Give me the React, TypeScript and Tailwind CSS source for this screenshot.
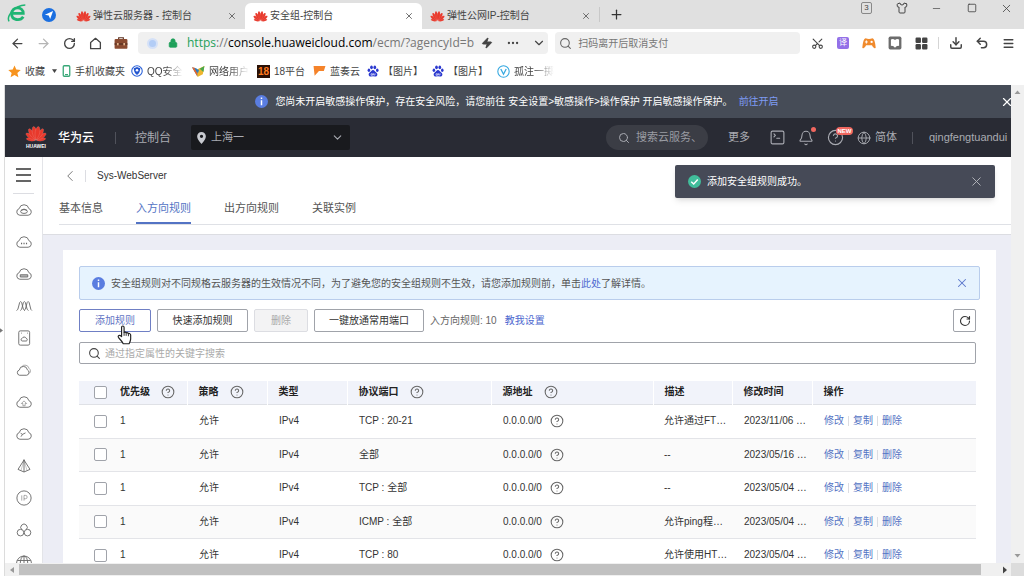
import type { ReactNode } from 'react'
import {
  ArrowLeft,
  ArrowRight,
  Bell,
  ChevronDown,
  ChevronLeft,
  CircleHelp,
  Download,
  Ellipsis,
  Globe,
  Lock,
  Menu,
  Minus,
  Plus,
  RotateCw,
  Scissors,
  Search,
  Shirt,
  Square,
  SquareTerminal,
  Undo2,
  X,
  Zap
} from 'lucide-react'

const petals = [
  { angle: -78, scale: 0.72 },
  { angle: 78, scale: 0.72 },
  { angle: -54, scale: 0.9 },
  { angle: 54, scale: 0.9 },
  { angle: -31, scale: 1 },
  { angle: 31, scale: 1 },
  { angle: -10, scale: 1.05 },
  { angle: 10, scale: 1.05 }
]

const HuaweiLogo = ({ className }: { className?: string }) => (
  <svg viewBox="0 0 32 24" className={className} aria-hidden="true">
    {petals.map(({ angle, scale }) => (
      <path
        key={angle}
        transform={`translate(16 22) rotate(${angle}) scale(${scale})`}
        d="M0 -1C-3.4 -7 -4.4 -14 -1.6 -19.5C-.8 -21 .8 -21 1.6 -19.5C4.4 -14 3.4 -7 0 -1Z"
        fill="#e8392c"
        stroke="#ffffff"
        strokeOpacity=".35"
        strokeWidth=".5"
      />
    ))}
  </svg>
)

const BrowserLogo = () => (
  <svg viewBox="0 0 24 24" className="h-5 w-5" fill="none" aria-hidden="true">
    <path d="M5 12.5H19.5C19.5 3.5 6 3.5 5.5 13C5.5 21 16 22 19.5 16.5" stroke="#1fb573" strokeWidth="3.4" />
    <path d="M2.5 22C-1 16 9 3 22 2.5" stroke="#1fb573" strokeWidth="1.8" />
  </svg>
)

const Briefcase = () => (
  <svg viewBox="0 0 24 24" className="h-[14px] w-[14px]" aria-hidden="true">
    <path d="M8 6V3H16V6" fill="none" stroke="#5b3222" strokeWidth="2" />
    <rect x="1" y="5" width="22" height="17" rx="2" fill="#8a4b31" />
    <path d="M1 12.5H23V15H1Z" fill="#5b3222" />
    <rect x="5" y="12" width="3" height="4" fill="#e2b48e" />
    <rect x="16" y="12" width="3" height="4" fill="#e2b48e" />
  </svg>
)

const Gamepad = () => (
  <svg viewBox="0 0 24 24" className="h-[14px] w-[14px]" aria-hidden="true">
    <path d="M6 4Q12 6 18 4Q22 5 23.5 20Q20 23 17 16H7Q4 23 .5 20Q2 5 6 4Z" fill="#f08a2c" />
    <path d="M7.5 7.5V13M5 10.2H10" stroke="#fff" strokeWidth="1.6" />
    <circle cx="16.5" cy="10.2" r="2" fill="#fff" />
  </svg>
)

const Reader = () => (
  <svg viewBox="0 0 24 24" className="h-[14px] w-[14px]" aria-hidden="true">
    <rect x="1" y="1" width="22" height="22" rx="3" fill="#6c6c6c" />
    <path d="M5 6Q9 4 12 7Q15 4 19 6V17Q15 16 12 20Q9 16 5 17Z" fill="#fff" />
  </svg>
)

const Apps = () => (
  <svg viewBox="0 0 24 24" className="h-[13px] w-[13px]" fill="#444" aria-hidden="true">
    <rect x="1" y="1" width="10" height="10" rx="2" />
    <rect x="13" y="1" width="10" height="10" rx="2" />
    <rect x="1" y="13" width="10" height="10" rx="2" />
    <rect x="13" y="13" width="10" height="10" rx="2" />
  </svg>
)

const Info = () => (
  <svg viewBox="0 0 16 16" className="h-[13px] w-[13px] shrink-0" aria-hidden="true">
    <circle cx="8" cy="8" r="8" fill="#5a7de0" />
    <path d="M8 3.2V5M8 6.6V12.6" stroke="#fff" strokeWidth="1.8" />
  </svg>
)

const HandCursor = () => (
  <svg
    viewBox="0 0 18 24"
    className="pointer-events-none absolute top-4 left-[38px] z-10 h-5 w-[15px]"
    aria-hidden="true"
  >
    <path
      d="M5.5 14V3Q5.5 1.2 7 1.2Q8.5 1.2 8.5 3V9Q9.8 7.8 11 9.3Q12.6 8.6 13.6 10.2Q15.8 9.6 16.4 12V17Q16 20 14.5 22.5H7.5Q6 19.5 2.2 15.6Q.6 13.6 2.2 12.6Q3.6 12 5.5 14Z"
      fill="#fff"
      stroke="#222"
      strokeWidth="1.4"
      strokeLinejoin="round"
    />
    <path d="M8.5 9V13M11 9.5V13M13.7 10.5V13.5" stroke="#222" strokeWidth="1.1" />
  </svg>
)

const Paw = () => (
  <svg viewBox="0 0 24 24" className="h-3 w-3 shrink-0" fill="#2b39cf" aria-hidden="true">
    <ellipse cx="3.8" cy="10.5" rx="2.6" ry="3.5" />
    <ellipse cx="9" cy="4.6" rx="2.7" ry="3.8" />
    <ellipse cx="15.6" cy="4.6" rx="2.7" ry="3.8" />
    <ellipse cx="20.6" cy="10.5" rx="2.6" ry="3.5" />
    <path d="M12 10C9 10 8.5 13 5 15.5C1.5 18.5 4 23.5 8 23Q12 22 16 23C20.5 23.5 22.5 18.5 19 15.5C15.5 13 15 10 12 10Z" />
    <path d="M8 17.5H11V20.5H8ZM13 16.5V20H16V16.5" fill="none" stroke="#fff" strokeWidth="1.2" />
  </svg>
)

const pageTabs = [
  { title: '弹性云服务器 - 控制台', active: false },
  { title: '安全组-控制台', active: true },
  { title: '弹性公网IP-控制台', active: false }
]

const bookmarks: { name: string; width: string; faded?: boolean; icon: ReactNode }[] = [
  {
    name: '收藏',
    width: 'w-[54px]',
    icon: (
      <svg viewBox="0 0 24 24" className="h-[13px] w-[13px] shrink-0" fill="#f7931e" aria-hidden="true">
        <path d="M12 1L15.3 8.5L23.5 9.3L17.3 14.7L19.2 22.7L12 18.5L4.8 22.7L6.7 14.7L.5 9.3L8.7 8.5Z" />
      </svg>
    )
  },
  {
    name: '手机收藏夹',
    width: 'w-[69px]',
    icon: (
      <svg viewBox="0 0 16 24" className="h-3 w-[9px] shrink-0" fill="none" aria-hidden="true">
        <rect x="1.5" y="1.5" width="13" height="21" rx="2" stroke="#39a878" strokeWidth="2.6" />
        <path d="M5 19H11" stroke="#39a878" strokeWidth="2" />
      </svg>
    )
  },
  {
    name: 'QQ安全',
    width: 'w-[61px]',
    faded: true,
    icon: (
      <svg viewBox="0 0 24 24" className="h-3 w-3 shrink-0" aria-hidden="true">
        <circle cx="12" cy="12" r="10.5" fill="#fff" stroke="#2b62d9" strokeWidth="2.2" />
        <path d="M12 4L18.5 6.5Q18.5 15.5 12 20Q5.5 15.5 5.5 6.5Z" fill="#2456cf" />
        <circle cx="12" cy="10.5" r="2.5" fill="#fff" />
      </svg>
    )
  },
  {
    name: '网络用户',
    width: 'w-[65px]',
    faded: true,
    icon: (
      <svg viewBox="0 0 24 24" className="h-[13px] w-[13px] shrink-0" aria-hidden="true">
        <path d="M0 4L9 7L13 14L10 21Z" fill="#2a7fc0" />
        <path d="M0 4L5 5L11 18L9 20Z" fill="#e9662b" />
        <path d="M10 8L23 2L20 17L10 22Z" fill="#efb62e" />
        <path d="M14 7L23 2L21 13Z" fill="#49a94d" />
        <path d="M4 5L13 9L11 15Z" fill="#2a7fc0" />
      </svg>
    )
  },
  {
    name: '18平台',
    width: 'w-[56px]',
    icon: (
      <span
        className="flex h-[13px] w-[13px] shrink-0 items-center justify-center bg-[#2a1005] text-[10px] font-bold text-[#ff7a1e]"
        aria-hidden="true"
      >
        18
      </span>
    )
  },
  {
    name: '蓝奏云',
    width: 'w-[54px]',
    icon: (
      <svg viewBox="0 0 24 24" className="h-[13px] w-[13px] shrink-0" fill="#f5832a" aria-hidden="true">
        <path d="M1 2H23L20 11H11L3 20Z" />
      </svg>
    )
  },
  { name: '【图片】', width: 'w-[65px]', icon: <Paw /> },
  { name: '【图片】', width: 'w-[65px]', icon: <Paw /> },
  {
    name: '孤注一掷',
    width: 'w-[60px]',
    faded: true,
    icon: (
      <svg viewBox="0 0 24 24" className="h-[13px] w-[13px] shrink-0" fill="none" aria-hidden="true">
        <circle cx="12" cy="12" r="10.5" stroke="#35a8e0" strokeWidth="2" />
        <path d="M7 7.5L12 17L17 7.5" stroke="#35a8e0" strokeWidth="2.4" />
      </svg>
    )
  }
]

const cloud = 'M6.5 19H17.5A4.5 4.5 0 0 0 18.5 10.2A6.6 6.6 0 0 0 5.6 10.2A4.5 4.5 0 0 0 6.5 19Z'

const services: { name: string; drawing: ReactNode }[] = [
  {
    name: '弹性云服务器',
    drawing: (
      <>
        <path d={cloud} />
        <ellipse cx="12" cy="14" rx="4.5" ry="2.6" />
        <path d="M8 12.5Q12 9 16 12.5" />
      </>
    )
  },
  {
    name: '云容器引擎',
    drawing: (
      <>
        <path d={cloud} />
        <path d="M8 14H9.5M11.3 14H12.8M14.6 14H16.1" strokeWidth="1.8" />
      </>
    )
  },
  {
    name: '裸金属服务器',
    drawing: (
      <>
        <path d={cloud} />
        <path d="M7 13H17V16H7Z" fill="#bbb" />
      </>
    )
  },
  {
    name: '弹性伸缩',
    drawing: (
      <path d="M2 18Q4 18 5 12T7.5 6Q9 6 10 12T13 18M7 18Q9 18 10 12T12.5 6Q14 6 15 12T18 18M12 18Q14 18 15 12T17.5 6Q19 6 20 12T22.5 18" />
    )
  },
  {
    name: '云硬盘',
    drawing: (
      <>
        <rect x="5" y="2.5" width="14.5" height="19" rx="2" />
        <path d="M9.5 16H15A1.8 1.8 0 0 0 15 12.5A3 3 0 0 0 9.5 12.5A1.8 1.8 0 0 0 9.5 16Z" />
        <path d="M8 5.5H9M16 5.5H17" />
      </>
    )
  },
  {
    name: '云备份',
    drawing: (
      <>
        <path d="M6 19H15.5A3.8 3.8 0 0 0 16.5 11.8A5.4 5.4 0 0 0 5.8 12A3.6 3.6 0 0 0 6 19Z" />
        <path d="M9 7.5A5.6 5.6 0 0 1 18.8 10A4 4 0 0 1 19 16.5" strokeOpacity=".6" />
      </>
    )
  },
  {
    name: '对象存储',
    drawing: (
      <>
        <path d={cloud} />
        <path d="M12 10.5L15.5 14H13.5V17H10.5V14H8.5Z" strokeOpacity=".6" />
      </>
    )
  },
  {
    name: '内容分发',
    drawing: (
      <>
        <path d={cloud} />
        <path d="M8 15.5L10 12.5L14 10.5M7.5 11L10 12.5" />
      </>
    )
  },
  {
    name: '弹性负载均衡',
    drawing: (
      <>
        <path d="M12 3V20M12 4L4 16.5L12 20L20 16.5Z" />
        <path d="M12 4L8 18M12 4L16 18" strokeOpacity=".4" />
      </>
    )
  },
  {
    name: '弹性公网IP',
    drawing: (
      <>
        <circle cx="12" cy="12" r="9.5" />
        <path d="M9 8.5V15.5M12 15.5V8.5H14A2.2 2.2 0 0 1 14 13H12" strokeOpacity=".6" />
      </>
    )
  },
  {
    name: '云监控',
    drawing: (
      <>
        <path d="M9 11.5A4.3 4.3 0 1 1 15 11.5" />
        <circle cx="7.3" cy="15.5" r="4.4" />
        <circle cx="16.7" cy="15.5" r="4.4" />
      </>
    )
  },
  {
    name: '域名解析',
    drawing: (
      <>
        <circle cx="12" cy="14" r="10" />
        <ellipse cx="12" cy="14" rx="5" ry="10" />
        <path d="M12 4V24M3 10H21M2 15H22" />
      </>
    )
  }
]

const rules = [
  { port: 'TCP : 20-21', note: '允许通过FT…', time: '2023/11/06 …' },
  { port: '全部', note: '--', time: '2023/05/16 …' },
  { port: 'TCP : 全部', note: '--', time: '2023/05/04 …' },
  { port: 'ICMP : 全部', note: '允许ping程…', time: '2023/05/04 …' },
  { port: 'TCP : 80', note: '允许使用HT…', time: '2023/05/04 …' }
]

const columns = [
  { title: '优先级', help: true },
  { title: '策略', help: true },
  { title: '类型', help: false },
  { title: '协议端口', help: true },
  { title: '源地址', help: true },
  { title: '描述', help: false },
  { title: '修改时间', help: false },
  { title: '操作', help: false }
]

const ToolButton = ({ label, children }: { label: string; children: ReactNode }) => (
  <button type="button" aria-label={label} className="flex h-6 w-[26px] shrink-0 items-center justify-center text-[#444]">
    {children}
  </button>
)

const WindowButton = ({ label, children }: { label: string; children: ReactNode }) => (
  <button type="button" aria-label={label} className="flex h-4 w-[35px] items-center justify-center text-[#444]">
    {children}
  </button>
)

const TabStrip = () => (
  <div className="flex h-[29px] shrink-0 bg-[#e0e0e0]">
    <div className="flex w-[68px] shrink-0 items-center gap-[15px] pb-[3px] pl-[7px]">
      <BrowserLogo />
      <svg viewBox="0 0 24 24" className="mt-1 h-[14px] w-[14px]" aria-hidden="true">
        <circle cx="12" cy="12" r="12" fill="#1b6fe0" />
        <path d="M5 11.5L19 5L14 19L11.5 13Z" fill="#fff" />
      </svg>
    </div>
    <div className="flex" role="tablist">
      {pageTabs.map((tab) => (
        <div
          key={tab.title}
          className={`flex w-[177px] items-center pl-2 ${tab.active ? 'mt-[3px] rounded-t-md bg-white' : 'pt-[3px]'}`}
        >
          <HuaweiLogo className="h-[11px] w-[15px] shrink-0" />
          <button
            type="button"
            role="tab"
            aria-selected={tab.active}
            className="ml-[2px] flex-1 truncate text-left text-[10px] leading-4 text-[#444]"
          >
            {tab.title}
          </button>
          <button type="button" aria-label="关闭标签页" className="mr-2 text-[#555]">
            <X size={10} />
          </button>
        </div>
      ))}
    </div>
    <button type="button" aria-label="新建标签页" className="my-[7px] border-l border-[#c8c8c8] px-[9px] text-[#333]">
      <Plus size={15} />
    </button>
    <div className="ml-auto flex items-start">
      <WindowButton label="标签页数量">
        <span className="flex h-3 w-[11px] items-center justify-center rounded-xs border border-[#888] text-[8px]">3</span>
      </WindowButton>
      <WindowButton label="皮肤">
        <Shirt size={12} />
      </WindowButton>
      <WindowButton label="最小化">
        <Minus size={11} strokeWidth={1.5} />
      </WindowButton>
      <WindowButton label="最大化">
        <Square size={10} />
      </WindowButton>
      <WindowButton label="关闭">
        <X size={13} strokeWidth={1.5} />
      </WindowButton>
    </div>
  </div>
)

const AddressBar = () => (
  <div className="flex h-7 shrink-0 items-center bg-white pr-[3px] pl-1">
    <ToolButton label="后退">
      <ArrowLeft size={15} />
    </ToolButton>
    <ToolButton label="前进">
      <ArrowRight size={15} className="text-[#b5b5b5]" />
    </ToolButton>
    <ToolButton label="刷新">
      <RotateCw size={13} strokeWidth={2.5} />
    </ToolButton>
    <ToolButton label="主页">
      <svg viewBox="0 0 24 24" className="h-[13px] w-[13px]" fill="none" stroke="#444" strokeWidth="2.4" aria-hidden="true">
        <path d="M3 10L12 2.5L21 10V21.5H3Z" strokeLinejoin="round" />
      </svg>
    </ToolButton>
    <ToolButton label="工具箱">
      <Briefcase />
    </ToolButton>
    <div className="ml-1 flex h-[22px] min-w-0 flex-5 items-center rounded-sm bg-[#f0f0f0] pl-[9px]">
      <span className="flex h-[11px] w-[11px] shrink-0 items-center justify-center rounded-full bg-[#d5e1f7]">
        <span className="h-[7px] w-[7px] rounded-full bg-[#b3cdf6]" />
      </span>
      <Lock size={10} className="mr-[9px] ml-[10px] shrink-0 text-[#1fa05a]" fill="#1fa05a" />
      <a
        href="#address"
        className="flex-1 font-['Open_Sans',sans-serif] text-[12px] leading-5 whitespace-nowrap text-[#777]"
      >
        <span className="text-[#1fa05a]">https</span>://<span className="text-black">console.huaweicloud.com</span>
        /ecm/?agencyId=b
      </a>
      <ToolButton label="极速模式">
        <Zap size={12} fill="#444" />
      </ToolButton>
      <ToolButton label="更多操作">
        <Ellipsis size={14} />
      </ToolButton>
      <ToolButton label="展开地址">
        <ChevronDown size={14} />
      </ToolButton>
    </div>
    <label className="ml-[7px] flex h-[22px] min-w-0 flex-3 items-center rounded-sm bg-[#f0f0f0] pl-1">
      <Search size={13} className="shrink-0 text-[#666]" />
      <input
        type="text"
        aria-label="搜索"
        placeholder="扫码离开后取消支付"
        className="ml-[6px] w-full min-w-0 bg-transparent text-[10px] outline-none placeholder:text-[#777]"
      />
    </label>
    <div className="ml-1 flex">
      <ToolButton label="截图">
        <Scissors size={13} className="-rotate-90" />
      </ToolButton>
      <ToolButton label="翻译">
        <span className="flex h-3 w-3 items-center justify-center rounded-xs bg-[#9370e8] text-[8px] text-white">译</span>
      </ToolButton>
      <ToolButton label="游戏">
        <Gamepad />
      </ToolButton>
      <ToolButton label="阅读">
        <Reader />
      </ToolButton>
      <ToolButton label="应用">
        <Apps />
      </ToolButton>
    </div>
    <span className="mx-1 h-3 w-px shrink-0 bg-[#d5d5d5]" />
    <ToolButton label="下载">
      <Download size={14} strokeWidth={2.5} />
    </ToolButton>
    <ToolButton label="恢复">
      <Undo2 size={14} strokeWidth={2.5} />
    </ToolButton>
    <ToolButton label="菜单">
      <Menu size={13} strokeWidth={2.5} />
    </ToolButton>
  </div>
)

const BookmarkBar = () => (
  <nav className="flex h-7 shrink-0 items-center bg-white pl-2" aria-label="收藏栏">
    {bookmarks.map(({ name, width, faded, icon }, index) => (
      <a
        key={index}
        href="#bookmark"
        className={`flex h-5 shrink-0 items-center gap-1 whitespace-nowrap text-[10px] text-[#444] ${width}`}
      >
        {icon}
        <span className={faded ? 'mask-r-from-50%' : ''}>{name}</span>
        {index === 0 && (
          <svg viewBox="0 0 8 6" className="ml-[3px] h-1 w-[5px]" fill="#444" aria-hidden="true">
            <path d="M0 0H8L4 6Z" />
          </svg>
        )}
      </a>
    ))}
  </nav>
)

const ConsoleHeader = () => (
  <header className="flex h-[39px] shrink-0 items-center bg-[#292b34] pl-5 whitespace-nowrap text-[#a9abb2]">
    <a href="#home" className="flex items-center text-white">
      <span className="flex w-[22px] flex-col items-center">
        <HuaweiLogo className="h-4 w-[22px]" />
        <span className="mt-px text-[5px] leading-[6px] font-bold">HUAWEI</span>
      </span>
      <span className="ml-[11px] text-[12px] font-medium">华为云</span>
    </a>
    <span className="mr-[19px] ml-[21px] h-3 w-px bg-[#50525b]" />
    <a href="#console" className="text-[12px]">
      控制台
    </a>
    <div className="ml-5 flex h-[25px] w-[159px] items-center rounded-xs bg-[#191a1e] px-[6px]">
      <svg viewBox="0 0 16 22" className="h-3 w-[9px] shrink-0" aria-hidden="true">
        <path
          d="M8 0A8 8 0 0 1 16 8Q16 14 8 22Q0 14 0 8A8 8 0 0 1 8 0ZM8 5A3 3 0 1 0 8 11A3 3 0 1 0 8 5Z"
          fill="#c8cad0"
          fillRule="evenodd"
        />
      </svg>
      <select aria-label="区域" className="ml-[5px] flex-1 appearance-none bg-transparent text-[11px] outline-none">
        <option>上海一</option>
      </select>
      <ChevronDown size={13} className="shrink-0" />
    </div>
    <label className="ml-auto flex h-[25px] w-[102px] items-center rounded-full bg-[#3b3d45] pr-[10px] pl-3">
      <Search size={12} className="shrink-0" />
      <input
        type="text"
        aria-label="搜索云服务"
        placeholder="搜索云服务、"
        className="ml-[6px] w-full min-w-0 bg-transparent text-[11px] outline-none placeholder:text-[#9a9ca3]"
      />
    </label>
    <button type="button" className="ml-5 text-[11px]">
      更多
    </button>
    <button type="button" aria-label="CloudShell" className="ml-[19px]">
      <SquareTerminal size={17} strokeWidth={1.6} />
    </button>
    <button type="button" aria-label="消息" className="relative ml-[12px]">
      <Bell size={16} strokeWidth={1.6} />
      <span className="absolute -top-[3px] -right-[2px] h-[5px] w-[5px] rounded-full bg-[#f0675f]" />
    </button>
    <button type="button" aria-label="帮助" className="relative ml-[13px]">
      <CircleHelp size={17} strokeWidth={1.6} />
      <span className="absolute -top-[2px] left-[9px] flex h-2 w-[17px] items-center justify-center rounded-full bg-[#f0675f] text-[6px] font-bold text-white">
        NEW
      </span>
    </button>
    <button type="button" className="ml-[13px] flex items-center gap-1 text-[11px]">
      <Globe size={14} strokeWidth={1.6} />
      简体
    </button>
    <span className="mr-4 ml-[15px] h-3 w-px bg-[#50525b]" />
    <a href="#account" className="w-[82px] overflow-hidden text-[11px]">
      qingfengtuandui
    </a>
  </header>
)

const ServiceRail = () => (
  <nav className="flex w-[38px] shrink-0 flex-col items-center border-r border-[#e3e4e8] bg-white" aria-label="服务列表">
    <button
      type="button"
      aria-label="展开菜单"
      className="flex h-[37px] w-[21px] shrink-0 items-center justify-center border-b border-[#dcdde2]"
    >
      <svg viewBox="0 0 15 14" className="h-[14px] w-[15px]" stroke="#333" strokeWidth="1.5" aria-hidden="true">
        <path d="M0 1H15M0 7H15M0 13H15" />
      </svg>
    </button>
    {services.map(({ name, drawing }) => (
      <a key={name} href="#service" aria-label={name} className="flex h-8 shrink-0 items-center">
        <svg viewBox="0 0 24 24" className="h-[18px] w-[18px]" fill="none" stroke="#666" strokeWidth="1.2" aria-hidden="true">
          {drawing}
        </svg>
      </a>
    ))}
  </nav>
)

const sections = ['基本信息', '入方向规则', '出方向规则', '关联实例']

const PageHeading = () => (
  <div className="shrink-0 border-b border-[#dcdde2] bg-white pb-[9px] pl-4">
    <div className="flex h-[37px] items-center">
      <button type="button" aria-label="返回" className="ml-[2px] text-[#777]">
        <ChevronLeft size={18} strokeWidth={1.3} />
      </button>
      <span className="mr-[11px] ml-[6px] h-3 w-px bg-[#dcdde2]" />
      <h1 className="text-[10px] text-[#333]">Sys-WebServer</h1>
    </div>
    <nav className="flex h-[31px] gap-[33px] border-b border-[#dfe1e6]" aria-label="安全组">
      {sections.map((section, index) => (
        <a
          key={section}
          href="#section"
          className={`flex h-[30px] items-center border-b-2 text-[11px] ${
            index === 1 ? 'border-[#5373c4] text-[#5373c4]' : 'border-transparent text-[#555]'
          }`}
        >
          {section}
        </a>
      ))}
    </nav>
  </div>
)

const HelpButton = () => (
  <button type="button" aria-label="说明" className="text-[#666]">
    <CircleHelp size={14} strokeWidth={1.8} />
  </button>
)

const RuleCheckbox = ({ label }: { label: string }) => (
  <input
    type="checkbox"
    aria-label={label}
    className="block h-[13px] w-[13px] appearance-none rounded-xs border border-[#a0a3aa] bg-white"
  />
)

const RuleTable = () => (
  <table className="mt-[17px] w-full table-fixed border-collapse text-left text-[10px] leading-4 text-[#333]">
    <colgroup>
      <col className="w-[30px]" />
      <col className="w-[78px]" />
      <col className="w-20" />
      <col className="w-20" />
      <col className="w-36" />
      <col className="w-[162px]" />
      <col className="w-[79px]" />
      <col className="w-20" />
      <col />
    </colgroup>
    <thead>
      <tr className="h-[23px] border-b border-[#dfe1e6] bg-[#f1f3fa]">
        <th className="pl-[15px]">
          <RuleCheckbox label="全选" />
        </th>
        {columns.map(({ title, help }, index) => (
          <th key={title} className={`pl-[11px] font-bold text-[#222] ${index > 0 ? 'border-l border-white' : ''}`}>
            <div className="flex items-center gap-[11px]">
              {title}
              {help && <HelpButton />}
            </div>
          </th>
        ))}
      </tr>
    </thead>
    <tbody>
      {rules.map(({ port, note, time }, index) => (
        <tr key={index} className="h-[34px] border-b border-[#e3e4e8] whitespace-nowrap even:h-[33px] even:bg-[#fafafa]">
          <td className="pl-[15px]">
            <RuleCheckbox label={`选择规则 ${index + 1}`} />
          </td>
          <td className="pl-[11px]">1</td>
          <td className="pl-3">允许</td>
          <td className="pl-3">IPv4</td>
          <td className="pl-3">{port}</td>
          <td className="pl-3">
            <div className="flex items-center gap-2">
              0.0.0.0/0
              <HelpButton />
            </div>
          </td>
          <td className="pl-[11px]">{note}</td>
          <td className="pl-3">{time}</td>
          <td className="pl-3">
            <div className="flex items-center text-[#5373c4]">
              <a href="#edit">修改</a>
              <span className="mx-1 h-[10px] w-px bg-[#dcdde2]" />
              <a href="#copy">复制</a>
              <span className="mx-1 h-[10px] w-px bg-[#dcdde2]" />
              <a href="#delete">删除</a>
            </div>
          </td>
        </tr>
      ))}
    </tbody>
  </table>
)

const InboundRules = () => (
  <div className="mt-[15px] mr-[15px] ml-5 flex-1 bg-white p-4">
    <div className="flex h-[34px] items-center rounded-xs border border-[#b9cdec] bg-[#e6f3fe] pr-[10px] pl-3 text-[10px] whitespace-nowrap text-[#555]">
      <Info />
      <p className="ml-[6px] flex-1">
        安全组规则对不同规格云服务器的生效情况不同，为了避免您的安全组规则不生效，请您添加规则前，单击
        <a href="#detail" className="text-[#4d68cf]">
          此处
        </a>
        了解详情。
      </p>
      <button type="button" aria-label="关闭提示" className="text-[#5c77cc]">
        <X size={14} strokeWidth={1.8} />
      </button>
    </div>

    <div className="mr-1">
      <div className="mt-[9px] flex h-[23px] items-stretch gap-[6px] text-[10px] whitespace-nowrap text-[#333]">
        <div className="relative flex">
          <button type="button" className="w-[72px] rounded-xs border border-[#6f7fc4] text-[#6274c4]">
            添加规则
          </button>
          <HandCursor />
        </div>
        <button type="button" className="w-[91px] rounded-xs border border-[#a0a3aa]">
          快速添加规则
        </button>
        <button type="button" disabled className="w-[54px] rounded-xs border border-[#dcdde2] bg-[#f3f3f4] text-[#aaa]">
          删除
        </button>
        <button type="button" className="w-[110px] rounded-xs border border-[#a0a3aa]">
          一键放通常用端口
        </button>
        <span className="flex items-center text-[#666]">入方向规则: 10</span>
        <a href="#guide" className="ml-[2px] flex items-center text-[#4d68cf]">
          教我设置
        </a>
        <button
          type="button"
          aria-label="刷新列表"
          className="ml-auto flex w-[23px] items-center justify-center rounded-xs border border-[#a0a3aa]"
        >
          <RotateCw size={12} strokeWidth={2.2} />
        </button>
      </div>

      <label className="mt-[10px] flex h-[22px] items-center rounded-xs border border-[#a0a3aa] pl-2">
        <Search size={13} className="shrink-0 text-[#444]" />
        <input
          type="text"
          aria-label="搜索规则"
          placeholder="通过指定属性的关键字搜索"
          className="ml-1 w-full min-w-0 text-[10px] outline-none placeholder:text-[#aaa]"
        />
      </label>

      <RuleTable />
    </div>
  </div>
)

const Toast = () => (
  <div
    role="status"
    className="absolute top-[8px] right-4 z-10 flex h-[33px] w-80 items-center rounded-xs bg-[#464a57] px-[11px] text-[10px] text-white shadow-md"
  >
    <svg viewBox="0 0 16 16" className="ml-[2px] h-[13px] w-[13px]" fill="none" aria-hidden="true">
      <circle cx="8" cy="8" r="8" fill="#41bd9b" />
      <path d="M4 8.2L7 11L12 5.5" stroke="#fff" strokeWidth="1.8" />
    </svg>
    <span className="ml-[6px] flex-1">添加安全组规则成功。</span>
    <button type="button" aria-label="关闭通知" className="text-[#b5b7bd]">
      <X size={15} strokeWidth={1.5} />
    </button>
  </div>
)

const App = () => {
  return (
    <div className="flex h-screen flex-col overflow-hidden bg-white font-['Liberation_Sans','Noto_Sans_CJK_SC',sans-serif]">
      <TabStrip />
      <AddressBar />
      <BookmarkBar />

      <div className="flex min-h-0 flex-1">
        <div className="flex w-[5px] shrink-0 items-center border-r border-[#dcdcdc]">
          <svg viewBox="0 0 4 6" className="h-[5px] w-[3px]" fill="#777" aria-hidden="true">
            <path d="M0 0L4 3L0 6Z" />
          </svg>
        </div>

        <div className="flex min-w-0 flex-1 flex-col">
          <div className="flex h-[33px] shrink-0 items-center justify-center bg-[#464c57] pl-[18px] text-[10px] whitespace-nowrap text-white">
            <span className="flex-1" />
            <Info />
            <p className="ml-[7px]">您尚未开启敏感操作保护，存在安全风险，请您前往 安全设置&gt;敏感操作&gt;操作保护 开启敏感操作保护。</p>
            <a href="#enable" className="ml-[6px] text-[#7e9bf5]">
              前往开启
            </a>
            <span className="flex flex-1 justify-end overflow-hidden">
              <button type="button" aria-label="关闭横幅" className="-mr-[3px]">
                <X size={14} />
              </button>
            </span>
          </div>
          <ConsoleHeader />
          <div className="relative flex min-h-0 flex-1 overflow-hidden">
            <ServiceRail />
            <main className="flex min-w-0 flex-1 flex-col overflow-hidden bg-[#ecedf5]">
              <PageHeading />
              <InboundRules />
            </main>
            <Toast />
          </div>
          <div className="flex h-[13px] shrink-0 items-center bg-[#f0f0f0]" aria-hidden="true">
            <svg viewBox="0 0 14 12" className="h-3 w-[14px]" fill="#999">
              <path d="M9 3V9L5 6Z" />
            </svg>
            <span className="h-[11px] flex-1 bg-[#c1c1c1]" />
            <svg viewBox="0 0 30 12" className="h-3 w-[30px]" fill="#444">
              <path d="M22 2.5V9.5L26 6Z" />
            </svg>
          </div>
        </div>

        <div className="flex w-[13px] shrink-0 flex-col items-center justify-between bg-[#f0f0f0]" aria-hidden="true">
          <svg viewBox="0 0 13 14" className="h-[14px] w-[13px]" fill="#999">
            <path d="M3.5 9H9.5L6.5 5.5Z" />
          </svg>
          <span className="flex-1" />
          <svg viewBox="0 0 13 14" className="h-[14px] w-[13px]" fill="#999">
            <path d="M3.5 5H9.5L6.5 8.5Z" />
          </svg>
          <span className="h-[13px] w-full bg-[#dcdcdc]" />
        </div>
      </div>
    </div>
  )
}

export default App
